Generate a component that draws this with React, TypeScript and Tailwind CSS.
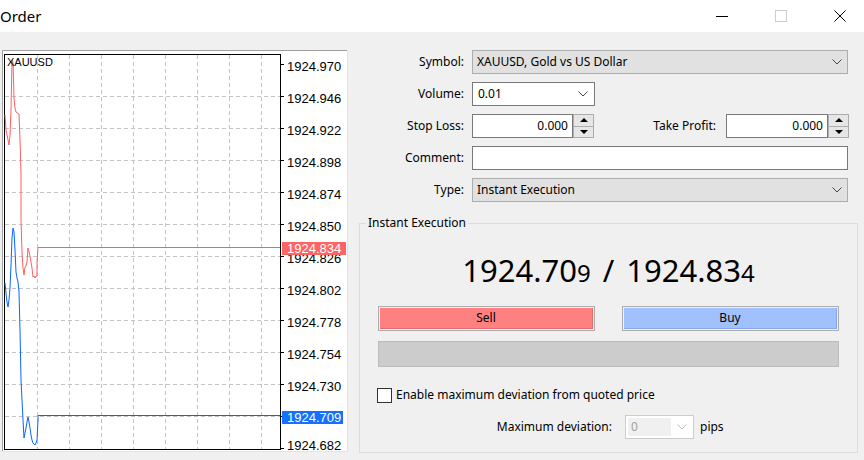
import React from 'react';

const gridX = [37, 69, 101, 133, 165, 197, 229, 261];
const gridY = [96, 128, 160, 192, 224, 256, 288, 320, 352, 384, 416];

// price axis labels: [text, baseline y]
const axisLabels: [string, number][] = [
    ['1924.970', 71], ['1924.946', 103], ['1924.922', 135], ['1924.898', 167],
    ['1924.874', 199], ['1924.850', 231], ['1924.826', 263], ['1924.802', 295],
    ['1924.778', 327], ['1924.754', 359], ['1924.730', 391], ['1924.682', 450],
];

const askLine = [
    [5, 115], [6, 130], [8, 140], [9, 145], [10, 135], [11, 110], [12, 60], [13, 62], [14, 98],
    [15, 108], [16, 112], [19, 114], [20, 140], [21, 175], [21, 220], [22, 252], [23, 268],
    [24, 275], [25, 267], [26, 266], [27, 262], [28, 248], [29, 252], [30, 256], [31, 262],
    [32, 268], [33, 277], [34, 276], [35, 278], [36, 276], [37, 276], [37, 262], [38, 248],
    [38, 247.5], [280, 247.5],
];

const bidLine = [
    [5, 283], [6, 293], [7, 302], [8, 307], [9, 300], [10, 288], [11, 265], [12, 238], [13, 228],
    [14, 232], [15, 250], [16, 272], [17, 278], [18, 282], [19, 292], [20, 330], [21, 380],
    [22, 400], [23, 420], [24, 438], [25, 433], [26, 428], [27, 422], [28, 417], [29, 422],
    [30, 428], [31, 435], [32, 440], [33, 443], [34, 444], [35, 445], [36, 443], [37, 440],
    [38, 420], [38, 415.5], [280, 415.5],
];

const toPoints = (pts: number[][]) => pts.map(p => `${p[0]},${p[1]}`).join(' ');

function Chart() {
    return (
        <svg width={346} height={402} viewBox="2 50 346 402" className="block">
            <rect x={2} y={50} width={346} height={402} fill="#ffffff" />
            <line x1={2} y1={50.5} x2={348} y2={50.5} stroke="#a0a0a0" />
            <line x1={2.5} y1={50} x2={2.5} y2={452} stroke="#a0a0a0" />
            <line x1={347.5} y1={50} x2={347.5} y2={452} stroke="#e3e3e3" />
            <line x1={2} y1={451.5} x2={348} y2={451.5} stroke="#e3e3e3" />

            {gridX.map(x => (
                <line key={'x' + x} x1={x + 0.5} y1={55} x2={x + 0.5} y2={449} stroke="#c4c4c4" strokeDasharray="4 3" />
            ))}
            {gridY.map(y => (
                <line key={'y' + y} x1={5} y1={y + 0.5} x2={280} y2={y + 0.5} stroke="#c4c4c4" strokeDasharray="4 3" />
            ))}

            <rect x={4.5} y={54.5} width={276} height={395} fill="none" stroke="#000000" />
            {[64, ...gridY, 448].map(y => (
                <line key={'t' + y} x1={281} y1={y + 0.5} x2={284} y2={y + 0.5} stroke="#000000" />
            ))}

            <polyline points={toPoints(askLine)} fill="none" stroke="#ff5f5f" strokeWidth={1} />
            <polyline points={toPoints(bidLine)} fill="none" stroke="#0a64ff" strokeWidth={1} />

            <text x={7} y={66} fontFamily="Liberation Sans, Arial, sans-serif" fontSize={11} fill="#000000">XAUUSD</text>

            {axisLabels.map(([t, y]) => (
                <text key={t} x={287} y={y} fontFamily="Liberation Sans, Arial, sans-serif" fontSize={13} fill="#000000">{t}</text>
            ))}

            <rect x={282} y={242} width={64} height={13} fill="#ff6464" />
            <text x={287} y={253} fontFamily="Liberation Sans, Arial, sans-serif" fontSize={13} fill="#ffffff">1924.834</text>
            <rect x={282} y={411} width={61} height={13} fill="#1470ff" />
            <text x={287} y={422} fontFamily="Liberation Sans, Arial, sans-serif" fontSize={13} fill="#ffffff">1924.709</text>
        </svg>
    )
}

function Chevron({ color = '#444444' }: { color?: string }) {
    return (
        <svg width={10} height={6} viewBox="0 0 10 6">
            <polyline points="0.5,0.5 5,5 9.5,0.5" fill="none" stroke={color} strokeWidth={1} />
        </svg>
    )
}

function Spinner() {
    return (
        <div className="w-[21px] h-full flex flex-col border border-[#adadad] bg-[#e6e6e6]">
            <div className="flex-1 flex items-center justify-center border-b border-[#adadad]">
                <svg width={8} height={4} viewBox="0 0 8 4"><polygon points="0,4 4,0 8,4" fill="#000000" /></svg>
            </div>
            <div className="flex-1 flex items-center justify-center">
                <svg width={8} height={4} viewBox="0 0 8 4"><polygon points="0,0 8,0 4,4" fill="#000000" /></svg>
            </div>
        </div>
    )
}

function Row({ label, children }: { label: string, children: React.ReactNode }) {
    return (
        <div className="flex items-center h-[24px]">
            <div className="w-[116px] text-right">{label}</div>
            <div className="ml-[8px] h-full flex items-center">{children}</div>
        </div>
    )
}

export default function App() {
    return (
        <div className="w-[864px] h-[460px] overflow-hidden bg-[#f0f0f0] font-['Noto_Sans',sans-serif] text-[12px] text-black">
            {/* title bar */}
            <div className="h-[32px] bg-white flex items-center justify-between">
                <span className="text-[15px] leading-none">Order</span>
                <div className="flex items-center gap-[47px] pr-[18px]">
                    <svg width={12} height={12} viewBox="0 0 12 12"><line x1={0} y1={6.5} x2={12} y2={6.5} stroke="#000000" /></svg>
                    <svg width={12} height={12} viewBox="0 0 12 12"><rect x={0.5} y={0.5} width={11} height={11} fill="none" stroke="#cccccc" /></svg>
                    <svg width={12} height={12} viewBox="0 0 12 12">
                        <line x1={0.5} y1={0.5} x2={11.5} y2={11.5} stroke="#000000" />
                        <line x1={11.5} y1={0.5} x2={0.5} y2={11.5} stroke="#000000" />
                    </svg>
                </div>
            </div>

            <div className="flex">
                <div className="ml-[2px] mt-[18px]">
                    <Chart />
                </div>

                <div className="w-[516px] pt-[18px] flex flex-col">
                    <div className="flex flex-col gap-[8px]">
                        <Row label="Symbol:">
                            <div className="w-[376px] h-full bg-[#e1e1e1] border border-[#adadad] flex items-center justify-between pl-[4px] pr-[5px]">
                                <span>XAUUSD, Gold vs US Dollar</span>
                                <Chevron />
                            </div>
                        </Row>
                        <Row label="Volume:">
                            <div className="w-[123px] h-full bg-white border border-[#7a7a7a] flex items-center justify-between pl-[5px] pr-[6px]">
                                <span>0.01</span>
                                <Chevron />
                            </div>
                        </Row>
                        <div className="flex items-center h-[24px]">
                            <div className="w-[116px] text-right">Stop Loss:</div>
                            <div className="ml-[8px] h-full flex">
                                <div className="w-[101px] h-full bg-white border border-[#7a7a7a] flex items-center justify-end pr-[4px]">0.000</div>
                                <Spinner />
                            </div>
                            <div className="w-[122px] text-right">Take Profit:</div>
                            <div className="ml-[10px] h-full flex">
                                <div className="w-[102px] h-full bg-white border border-[#7a7a7a] flex items-center justify-end pr-[4px]">0.000</div>
                                <Spinner />
                            </div>
                        </div>
                        <Row label="Comment:">
                            <div className="w-[376px] h-full bg-white border border-[#7a7a7a]" />
                        </Row>
                        <Row label="Type:">
                            <div className="w-[376px] h-full bg-[#e1e1e1] border border-[#adadad] flex items-center justify-between pl-[4px] pr-[5px]">
                                <span>Instant Execution</span>
                                <Chevron />
                            </div>
                        </Row>
                    </div>

                    <fieldset className="ml-[11px] mt-[13px] w-[499px] h-[238px] border border-[#dcdcdc] px-[6px]">
                        <legend className="px-[2px] leading-[16px]">Instant Execution</legend>

                        <div className="mt-[21px] h-[36px] flex items-baseline justify-center leading-[36px] text-[31px]">
                            <span>1924.70</span>
                            <span className="text-[24px]">9</span>
                            <span className="px-[12px]">/</span>
                            <span>1924.83</span>
                            <span className="text-[24px]">4</span>
                        </div>

                        <div className="mt-[18px] px-[12px] flex justify-between">
                            <div className="w-[217px] h-[25px] border border-[#adadad] bg-[#f0f0f0] p-[1px]">
                                <div className="h-full bg-[#ff8080] border-r border-b border-[#e46c6c] flex items-center justify-center">Sell</div>
                            </div>
                            <div className="w-[217px] h-[25px] border border-[#adadad] bg-[#f0f0f0] p-[1px]">
                                <div className="h-full bg-[#a0c0ff] border-r border-b border-[#88a8ec] flex items-center justify-center">Buy</div>
                            </div>
                        </div>

                        <div className="mt-[10px] mx-[12px] h-[26px] bg-[#cccccc] border border-[#bcbcbc]" />

                        <div className="mt-[20px] ml-[11px] flex items-center h-[16px]">
                            <div className="w-[15px] h-[15px] border border-[#333333] bg-white" />
                            <span className="ml-[4px]">Enable maximum deviation from quoted price</span>
                        </div>

                        <div className="mt-[12px] flex items-center h-[24px]">
                            <div className="w-[246px] text-right">Maximum deviation:</div>
                            <div className="ml-[13px] w-[69px] h-full border border-[#cccccc] bg-white flex items-center justify-between pl-[2px] pr-[6px]">
                                <div className="w-[43px] h-[18px] bg-[#f0f0f0] text-[#a0a0a0] flex items-center pl-[3px]">0</div>
                                <Chevron color="#bfbfbf" />
                            </div>
                            <span className="ml-[6px]">pips</span>
                        </div>
                    </fieldset>
                </div>
            </div>
        </div>
    )
}
